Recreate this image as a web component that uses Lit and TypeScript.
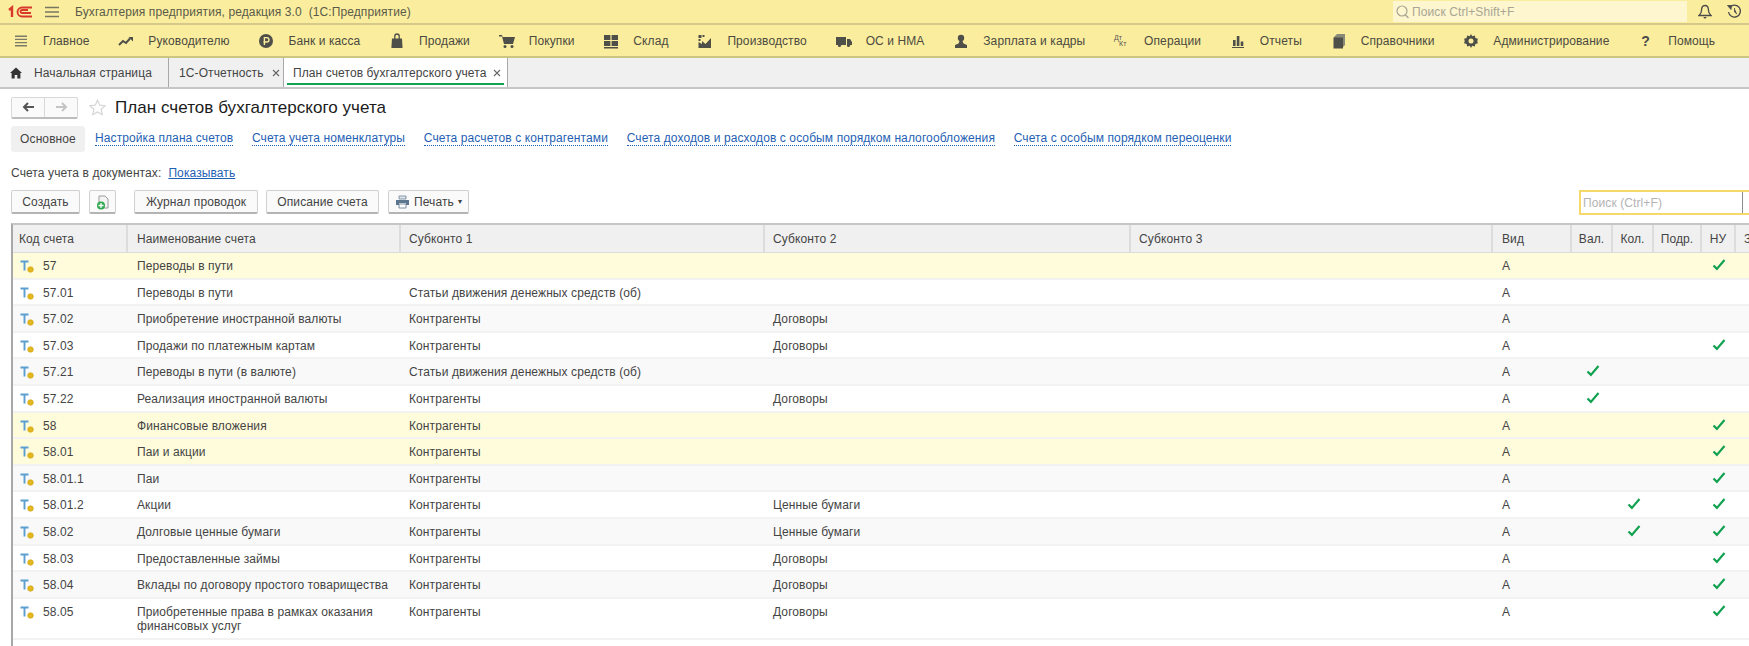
import { LitElement, html, css, svg } from "lit";
import { customElement } from "lit/decorators.js";

const ic = (body: unknown, w = 16, h = 16) => html`<svg width=${w} height=${h} viewBox="0 0 16 16" fill="#4f4f4a">${body}</svg>`;

const NAV: [string, unknown][] = [
  ["Главное", ic(svg`<path d="M2 2.500h12v1.400H2zM2 5.700h12v1.400H2zM2 8.900h12v1.400H2zM2 12.100h12v1.400H2z" fill="#7a7a68"/>`)],
  ["Руководителю", ic(svg`<path d="M1 12l4-4 3 2 4-4.500" fill="none" stroke="#4f4f4a" stroke-width="2"/><path d="M10.500 4H15v4.500z"/>`)],
  ["Банк и касса", ic(svg`<circle cx="8" cy="8" r="7"/><path d="M6.400 12V4.600h2.400a2 2 0 010 4.400H5.400" fill="none" stroke="#fbed9e" stroke-width="1.400"/>`)],
  ["Продажи", ic(svg`<path d="M3 5.500h10l.6 9.500H2.400z"/><path d="M5.800 6V3.200a2.200 2.200 0 014.400 0V6" fill="none" stroke="#4f4f4a" stroke-width="1.300"/>`)],
  ["Покупки", ic(svg`<path d="M0 2h3l.6 2H16l-2 7H5L3 3.500H0z"/><circle cx="6" cy="13.600" r="1.500"/><circle cx="13" cy="13.600" r="1.500"/>`)],
  ["Склад", ic(svg`<path d="M1 2h6.400v5H1zM8.600 2H15v5H8.600zM1 8h6.400v5H1zM8.600 8H15v5H8.600zM1 14h14v1.400H1z"/>`)],
  ["Производство", ic(svg`<path d="M1.500 15V9l3.500 2V8l3.500 3 5.500-6v10z"/><path d="M1.500 2h3v3h-3zM5.500 2h2v2h-2zM1.500 6h2v2h-2z"/>`)],
  ["ОС и НМА", ic(svg`<path d="M0 4h10v8H0zM11 6h3l2 3v3h-5z"/><circle cx="3.500" cy="12.500" r="1.600"/><circle cx="12.500" cy="12.500" r="1.600"/>`)],
  ["Зарплата и кадры", ic(svg`<circle cx="8" cy="5" r="3.200"/><path d="M6.500 8h3l1 2.500 3.500 1.500v3H2v-3l3.500-1.500z"/>`)],
  ["Операции", html`<span class="dtkt"><i>Дт</i><b>Кт</b></span>`],
  ["Отчеты", ic(svg`<path d="M3 7h2.600v6H3zM6.800 3h2.600v10H6.800zM10.700 8.500h2.600V13h-2.600zM2 14h12v1H2z"/>`)],
  ["Справочники", ic(svg`<path d="M3 4l3-3h8v11l-3 3H3z" fill="#8a8a78"/><path d="M2.500 4.500h9.500V15.500H2.500z"/>`)],
  ["Администрирование", ic(svg`<path d="M8 1l1.300 2.200 2.500-.6.600 2.500 2.500.6-.6 2.300.6 2.300-2.500.6-.6 2.500-2.500-.6L8 15l-1.300-2.200-2.500.6-.6-2.500-2.500-.6.600-2.300-.6-2.300 2.500-.6.600-2.500 2.500.6z"/><circle cx="8" cy="8" r="2.500" fill="#fbed9e"/>`)],
  ["Помощь", html`<span class="qm">?</span>`],
];

type Row = { code: string; name: string; s1?: string; s2?: string; val?: boolean; kol?: boolean; nu?: boolean; hl?: boolean };
const K = "Контрагенты", D = "Договоры", C = "Ценные бумаги", M = "Статьи движения денежных средств (об)";
const ROWS: Row[] = [
  { code: "57", name: "Переводы в пути", nu: true, hl: true },
  { code: "57.01", name: "Переводы в пути", s1: M },
  { code: "57.02", name: "Приобретение иностранной валюты", s1: K, s2: D },
  { code: "57.03", name: "Продажи по платежным картам", s1: K, s2: D, nu: true },
  { code: "57.21", name: "Переводы в пути (в валюте)", s1: M, val: true },
  { code: "57.22", name: "Реализация иностранной валюты", s1: K, s2: D, val: true },
  { code: "58", name: "Финансовые вложения", s1: K, nu: true, hl: true },
  { code: "58.01", name: "Паи и акции", s1: K, nu: true, hl: true },
  { code: "58.01.1", name: "Паи", s1: K, nu: true },
  { code: "58.01.2", name: "Акции", s1: K, s2: C, kol: true, nu: true },
  { code: "58.02", name: "Долговые ценные бумаги", s1: K, s2: C, kol: true, nu: true },
  { code: "58.03", name: "Предоставленные займы", s1: K, s2: D, nu: true },
  { code: "58.04", name: "Вклады по договору простого товарищества", s1: K, s2: D, nu: true },
  { code: "58.05", name: "Приобретенные права в рамках оказания финансовых услуг", s1: K, s2: D, nu: true },
];

const check = html`<svg class="chk" width="14" height="12" viewBox="0 0 14 12"><path d="M1.500 6.500l3.400 3.400 7.600-8.900" fill="none" stroke="#12a150" stroke-width="2.200"/></svg>`;
const close = html`<svg class="x" width="8" height="8" viewBox="0 0 8 8"><path d="M1 1l6 6M7 1l-6 6" stroke="#666" stroke-width="1.100"/></svg>`;
const tIcon = html`<svg class="t" width="14" height="16" viewBox="0 0 14 16"><path d="M.5 3.500h8M4.500 3.500v9" stroke="#5b9fd0" stroke-width="1.900" fill="none"/><circle cx="10.500" cy="11.500" r="2.800" fill="#e3b81e" stroke="#c99f10" stroke-width=".6"/></svg>`;

@customElement("app-root")
export class AppRoot extends LitElement {
  static styles = css`
    :host { display: block; width: 1749px; height: 646px; overflow: hidden; background: #fff; color: #444;
      font: 12px/14px "Liberation Sans", Arial, sans-serif; letter-spacing: .1px; }
    .top { height: 23px; background: #fbed9e; border-bottom: 2px solid #d4c98a; display: flex; align-items: center; }
    .logo { margin-left: 8px; }
    .burger { margin-left: 12px; }
    .apptitle { margin-left: 16px; flex: 1; white-space: pre; color: #5a5a4a; }
    .gsearch { width: 294px; height: 21px; background: #fdf6cf; display: flex; align-items: center; gap: 2px; padding-left: 3px; box-sizing: border-box; color: #a9a594; }
    .bell { margin-left: 11px; }
    .hist { margin: 0 7px 0 15px; }
    .nav { height: 31px; background: #fbed9e; border-bottom: 2px solid #cfc583; display: flex; align-items: center; padding-left: 13px; gap: 28.800px; white-space: nowrap; color: #4a4a40; }
    .nav-item { display: flex; align-items: center; }
    .nav-icon { width: 30px; display: flex; align-items: center; }
    .dtkt { display: grid; font: 7px/6px "Liberation Sans", sans-serif; color: #555; letter-spacing: 0; }
    .dtkt i { font-style: normal; }
    .dtkt b { font-weight: normal; margin-left: 5px; }
    .qm { font: bold 14px/16px "Liberation Sans", sans-serif; color: #4a4a4a; margin-left: 3px; }
    .tabs { height: 29px; background: #f0f0f0; border-bottom: 2px solid #c6c6c6; display: flex; }
    .tab { display: flex; align-items: center; border-right: 1px solid #a8a8a8; position: relative; white-space: nowrap; box-sizing: border-box; height: 29px; }
    .tab.home { width: 169px; padding-left: 10px; gap: 12px; }
    .tab.one { width: 115px; padding-left: 10px; gap: 8px; }
    .tab.active { width: 224px; padding-left: 9px; gap: 7px; background: #fff; }
    .tab.active::after { content: ""; position: absolute; left: 3px; right: 3px; bottom: 2px; height: 2px; background: #12a150; }
    .head { display: flex; align-items: center; height: 37px; padding-left: 11px; box-sizing: border-box; }
    .hist-btns { display: flex; height: 22px; width: 67px; border: 1px solid #d8d8d8; border-bottom: 2px solid #bdbdbd; border-radius: 2px; box-sizing: border-box; background: #fafafa; }
    .hist-btns span { flex: 1; display: flex; align-items: center; justify-content: center; }
    .hist-btns span + span { border-left: 1px solid #d8d8d8; }
    .star { margin: 0 9px 0 11px; }
    .title { font-size: 17px; line-height: 20px; color: #1c1c1c; letter-spacing: .05px; }
    .subs { display: flex; align-items: center; height: 26px; padding-left: 11px; white-space: nowrap; }
    .sub-active { width: 74px; height: 26px; background: #f0f0f0; border-radius: 3px; display: flex; align-items: center; justify-content: center; margin-right: 10px; }
    .sublink { color: #1f5fb4; border-bottom: 1px dotted #1f5fb4; margin-right: 18.700px; line-height: 13px; }
    .docs { height: 38px; padding: 14px 0 0 11px; box-sizing: border-box; white-space: nowrap; display: flex; }
    .docs a { color: #1f5fb4; text-decoration: underline; margin-left: 7px; }
    .bar { height: 25px; display: flex; align-items: flex-start; padding-left: 11px; }
    .btn { height: 24px; box-sizing: border-box; border: 1px solid #d0d0d0; border-bottom: 2px solid #b4b4b4; border-radius: 2px; background: #fafafa; display: flex; align-items: center; justify-content: center; white-space: nowrap; gap: 4px; padding-top: 1px; }
    .b-create { width: 69px; }
    .b-add { width: 27px; margin-left: 9px; }
    .b-journal { width: 124px; margin-left: 18px; }
    .b-desc { width: 113px; margin-left: 8px; }
    .b-print { width: 81px; margin-left: 9px; }
    .caret { font-size: 8px; }
    .spacer { flex: 1; }
    .search { width: 170px; height: 25px; box-sizing: border-box; border: 2px solid #f5d96b; border-right: none; display: flex; align-items: center; color: #b3b3b3; padding-left: 2px; }
    .search span { flex: 1; }
    .search i { width: 6px; height: 100%; border-left: 1px solid #8c8c8c; }
    .table { margin: 8px 0 0 11px; border-left: 2px solid #a8a8a8; border-top: 2px solid #c6c6c6; width: 1738px; box-sizing: border-box; min-height: 423px; }
    .row { display: grid; grid-template-columns: 115px 273px 364px 366px 362px 79px 41px 41px 48px 34px 40px; }
    .hdr { height: 28px; box-sizing: border-box; background: #f0f0f0; border-bottom: 1px solid #dcdcdc; }
    .hdr > div { border-right: 2px solid #dcdcdc; padding-left: 8px; display: flex; align-items: center; white-space: nowrap; overflow: hidden; }
    .hdr > div:first-child { padding-left: 6px; }
    .hdr > div:nth-child(2), .hdr > div:nth-child(6) { padding-left: 9px; }
    .hdr > div.c { padding-left: 0; justify-content: center; }
    .hdr > div:last-child { border-right: none; }
    .body-row { height: 26.600px; box-sizing: border-box; border-bottom: 2px solid #f2f2f2; }
    .body-row.alt { background: #f9f9f9; }
    .body-row.hl { background: #fffcdc; }
    .body-row.tall { height: 41px; }
    .body-row > div { padding: 6px 0 0 8px; }
    .body-row > div:nth-child(2), .body-row > div:nth-child(6) { padding-left: 9px; }
    .body-row > div.code { padding-left: 7px; display: flex; align-items: flex-start; gap: 9px; }
    .body-row > div.ck { padding: 6px 0 0 0; display: flex; justify-content: center; align-items: flex-start; }
    .t { margin-top: -1px; }
    .chk { display: block; }
  `;

  render() {
    return html`
      <div class="top">
        <svg class="logo" width="25" height="14" viewBox="0 0 25 14"><path d="M1 5l3-2.500V12" fill="none" stroke="#d8392b" stroke-width="2.400"/><path d="M24 11.500H14a4.500 4.500 0 010-9h10M23 8H14a1.500 1.500 0 010-3h6" fill="none" stroke="#d8392b" stroke-width="1.800"/></svg>
        <svg class="burger" width="14" height="12" viewBox="0 0 14 12"><path d="M0 1.500h14M0 6h14M0 10.500h14" stroke="#77775f" stroke-width="1.500"/></svg>
        <div class="apptitle">Бухгалтерия предприятия, редакция 3.0  (1С:Предприятие)</div>
        <div class="gsearch"><svg width="14" height="16" viewBox="0 0 14 16"><circle cx="6" cy="7" r="5" fill="none" stroke="#a9a594" stroke-width="1.200"/><path d="M9.500 11l3 3" stroke="#a9a594" stroke-width="1.400"/></svg>Поиск Ctrl+Shift+F</div>
        <svg class="bell" width="14" height="15" viewBox="0 0 14 15"><path d="M7 1.500c3 0 3.500 3 3.500 5s2 4.500 2.500 5H1c.5-.5 2.500-2.500 2.500-5s.5-5 3.500-5z" fill="none" stroke="#4a4a4a" stroke-width="1.300"/><path d="M5.500 13a1.500 1.500 0 003 0z" fill="#4a4a4a"/></svg>
        <svg class="hist" width="15" height="15" viewBox="0 0 15 15"><path d="M3 3a6 6 0 11-1.500 5" fill="none" stroke="#4a4a4a" stroke-width="1.300"/><path d="M0.500 1.500l4 0-.5 4z M7.500 4v4l2.500 2" fill="#4a4a4a" stroke="#4a4a4a" stroke-width=".8"/></svg>
      </div>
      <div class="nav">
        ${NAV.map(([t, i]) => html`<div class="nav-item"><span class="nav-icon">${i}</span>${t}</div>`)}
      </div>
      <div class="tabs">
        <div class="tab home"><svg width="12" height="12" viewBox="0 0 12 12"><path d="M6 .5L12 6h-1.600v5.500H7.300V8H4.700v3.500H1.600V6H0z" fill="#333"/></svg>Начальная страница</div>
        <div class="tab one">1С-Отчетность ${close}</div>
        <div class="tab active">План счетов бухгалтерского учета ${close}</div>
      </div>
      <div class="head">
        <div class="hist-btns">
          <span><svg width="13" height="10" viewBox="0 0 13 10"><path d="M6 1L2 5l4 4M2 5h10" fill="none" stroke="#555" stroke-width="2"/></svg></span>
          <span><svg width="13" height="10" viewBox="0 0 13 10"><path d="M7 1l4 4-4 4M11 5H1" fill="none" stroke="#c4c4c4" stroke-width="2"/></svg></span>
        </div>
        <svg class="star" width="17" height="17" viewBox="0 0 15 15"><path d="M7.500 1l2 4.400 4.800.5-3.600 3.200 1 4.700-4.200-2.400-4.200 2.400 1-4.700L.700 5.900l4.800-.5z" fill="#fff" stroke="#d4d4d4"/></svg>
        <div class="title">План счетов бухгалтерского учета</div>
      </div>
      <div class="subs">
        <div class="sub-active">Основное</div>
        <span class="sublink">Настройка плана счетов</span>
        <span class="sublink">Счета учета номенклатуры</span>
        <span class="sublink">Счета расчетов с контрагентами</span>
        <span class="sublink">Счета доходов и расходов с особым порядком налогообложения</span>
        <span class="sublink">Счета с особым порядком переоценки</span>
      </div>
      <div class="docs">Счета учета в документах:<a>Показывать</a></div>
      <div class="bar">
        <div class="btn b-create">Создать</div>
        <div class="btn b-add"><svg width="14" height="15" viewBox="0 0 14 15"><path d="M3 1h6l3 3v9H3z" fill="#f4f4f4" stroke="#9a9a9a"/><circle cx="5" cy="10.500" r="4" fill="#2fa84f"/><path d="M5 8v5M2.500 10.500h5" stroke="#fff" stroke-width="1.300"/></svg></div>
        <div class="btn b-journal">Журнал проводок</div>
        <div class="btn b-desc">Описание счета</div>
        <div class="btn b-print"><svg width="15" height="14" viewBox="0 0 15 14"><path d="M4 1h7v3H4z" fill="#dfe6ee" stroke="#6b7f94" stroke-width=".8"/><path d="M1 5h13v5h-3V8H4v2H1z" fill="#5d7690"/><path d="M4 9h7v4H4z" fill="#fff" stroke="#5d7690" stroke-width=".8"/></svg>Печать <span class="caret">▾</span></div>
        <div class="spacer"></div>
        <div class="search"><span>Поиск (Ctrl+F)</span><i></i></div>
      </div>
      <div class="table">
        <div class="row hdr">
          <div>Код счета</div><div>Наименование счета</div><div>Субконто 1</div><div>Субконто 2</div><div>Субконто 3</div><div>Вид</div>
          <div class="c">Вал.</div><div class="c">Кол.</div><div class="c">Подр.</div><div class="c">НУ</div><div>З</div>
        </div>
        ${ROWS.map((r, i) => html`
          <div class="row body-row ${r.hl ? "hl" : i % 2 === 0 ? "alt" : ""} ${r.code === "58.05" ? "tall" : ""}">
            <div class="code">${tIcon}<span>${r.code}</span></div>
            <div>${r.name}</div><div>${r.s1 ?? ""}</div><div>${r.s2 ?? ""}</div><div></div><div>А</div>
            <div class="ck">${r.val ? check : ""}</div><div class="ck">${r.kol ? check : ""}</div><div class="ck"></div><div class="ck">${r.nu ? check : ""}</div><div></div>
          </div>`)}
      </div>
    `;
  }
}
